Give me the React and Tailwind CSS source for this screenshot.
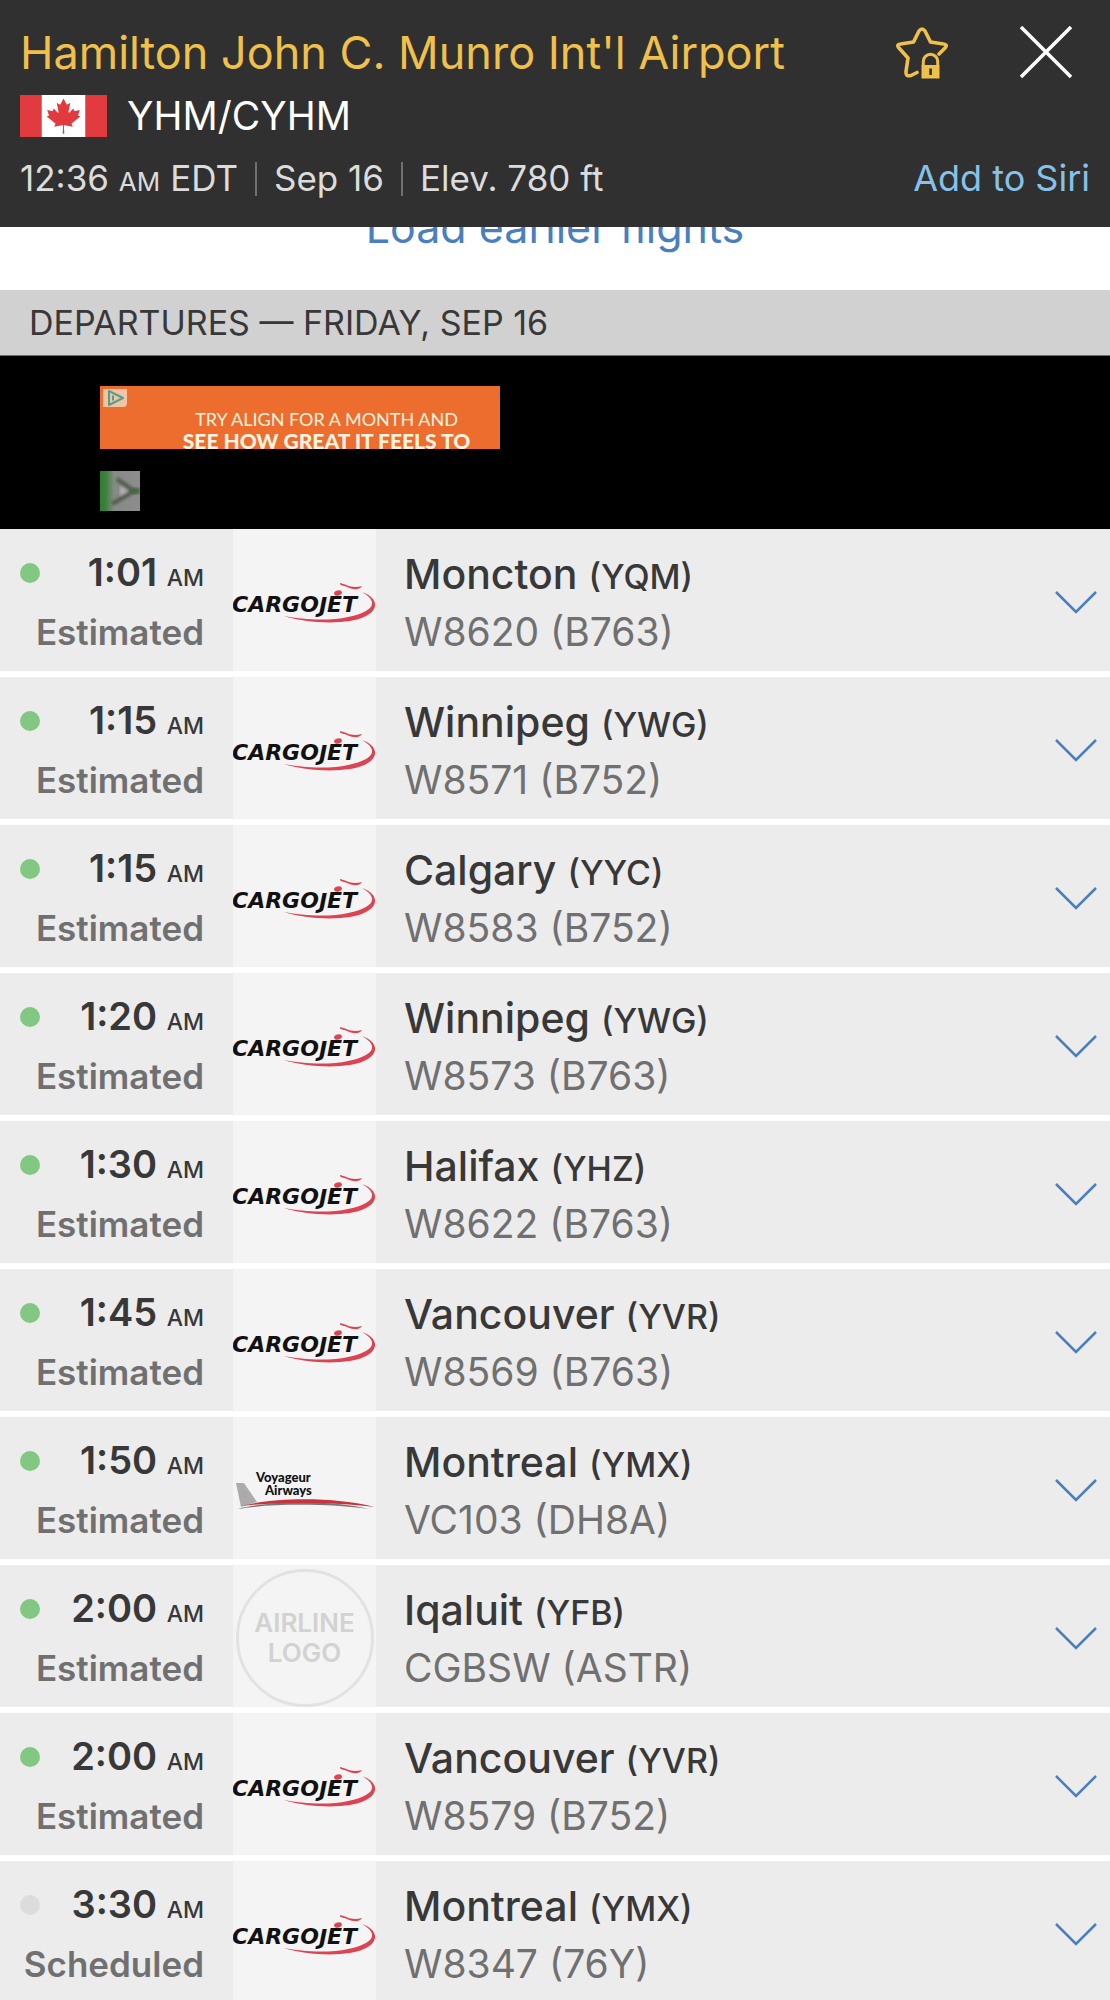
// src/App.jsx

import React, { useState } from 'react';

const flights = [
  { time: '1:01', status: 'Estimated', airline: 'cargojet', city: 'Moncton', code: 'YQM', flight: 'W8620', aircraft: 'B763' },
  { time: '1:15', status: 'Estimated', airline: 'cargojet', city: 'Winnipeg', code: 'YWG', flight: 'W8571', aircraft: 'B752' },
  { time: '1:15', status: 'Estimated', airline: 'cargojet', city: 'Calgary', code: 'YYC', flight: 'W8583', aircraft: 'B752' },
  { time: '1:20', status: 'Estimated', airline: 'cargojet', city: 'Winnipeg', code: 'YWG', flight: 'W8573', aircraft: 'B763' },
  { time: '1:30', status: 'Estimated', airline: 'cargojet', city: 'Halifax', code: 'YHZ', flight: 'W8622', aircraft: 'B763' },
  { time: '1:45', status: 'Estimated', airline: 'cargojet', city: 'Vancouver', code: 'YVR', flight: 'W8569', aircraft: 'B763' },
  { time: '1:50', status: 'Estimated', airline: 'voyageur', city: 'Montreal', code: 'YMX', flight: 'VC103', aircraft: 'DH8A' },
  { time: '2:00', status: 'Estimated', airline: '', city: 'Iqaluit', code: 'YFB', flight: 'CGBSW', aircraft: 'ASTR' },
  { time: '2:00', status: 'Estimated', airline: 'cargojet', city: 'Vancouver', code: 'YVR', flight: 'W8579', aircraft: 'B752' },
  { time: '3:30', status: 'Scheduled', airline: 'cargojet', city: 'Montreal', code: 'YMX', flight: 'W8347', aircraft: '76Y' },
];

const CanadaFlag = () => (
  <svg viewBox="0 0 9600 4800" className="h-[42px] w-[87px] shrink-0" preserveAspectRatio="none" aria-hidden="true">
    <path fill="#e23b3f" d="M0 0h9600v4800H0z" />
    <path
      fill="#fff"
      d="m2400 0h4800v4800h-4800zm2490 4430-45-863a95 95 0 0 1 111-98l859 151-116-320a65 65 0 0 1 20-73l941-762-212-99a65 65 0 0 1-34-79l186-572-542 115a65 65 0 0 1-73-38l-105-247-423 454a65 65 0 0 1-111-57l204-1052-327 189a65 65 0 0 1-91-27l-332-652-332 652a65 65 0 0 1-91 27l-327-189 204 1052a65 65 0 0 1-111 57l-423-454-105 247a65 65 0 0 1-73 38l-542-115 186 572a65 65 0 0 1-34 79l-212 99 941 762a65 65 0 0 1 20 73l-116 320 859-151a95 95 0 0 1 111 98l-45 863z"
    />
  </svg>
);

const StarLockIcon = () => (
  <svg viewBox="0 0 52 52" className="size-[52px]" fill="none" aria-hidden="true">
    <path
      d="M43 27L49 21Q52 17.500 47.500 17L34.500 15L29 4Q26 0 23 4L17.500 15L4.500 17Q0 17.500 3 21L12 31L10 44.500Q9.500 50 15 48.500L21 45.500"
      stroke="#efc04a"
      strokeWidth="3.600"
      strokeLinecap="round"
      strokeLinejoin="round"
    />
    <path d="M27.300 39v-4.500a7.200 7.200 0 0 1 14.400 0V39" stroke="#efc04a" strokeWidth="3" />
    <path d="M25.500 38h18v13.500h-18z" fill="#efc04a" />
    <path d="M33.300 41.500h2.600v6.500h-2.600z" fill="#303030" />
  </svg>
);

const CargojetLogo = () => (
  <svg viewBox="0 0 143 142" className="size-full" role="img" aria-label="Cargojet">
    <path d="M129 63C149 70 147 87 117 92C97 95 69 93 51 87C70 91 98 92 115 88C143 82 145 72 129 63z" fill="#dc4453" />
    <path d="M107 54C113 55 118 60 129 57C126 62 118 60 114 58C111 56 106 57 107 54z" fill="#dc4453" />
    <ellipse cx="105" cy="64" rx="4" ry="2.500" transform="rotate(-15 105 64)" fill="#dc4453" />
    <text x="-1" y="83" className="font-['DejaVu_Sans'] text-[22px] font-bold italic" fill="#111">
      CARGO<tspan dy="1">J</tspan><tspan dy="-1">ET</tspan>
    </text>
  </svg>
);

const VoyageurLogo = () => (
  <svg viewBox="0 0 143 142" className="size-full" role="img" aria-label="Voyageur Airways">
    <path d="M3 66h7q2 0 3 3l11 16-16 5z" fill="#ababab" />
    <path d="M5 92C38 83 100 83 136 92C100 87 40 86 5 92z" fill="#777" />
    <path d="M8 89C42 80 104 80 141 90C102 85 42 85 8 89z" fill="#c9343c" />
    <text x="23" y="65" className="font-['Lato'] text-[13px] leading-none font-black" fill="#111">Voyageur</text>
    <text x="32" y="78" className="font-['Lato'] text-[13px] leading-none font-black" fill="#111">Airways</text>
  </svg>
);

const PlaceholderLogo = () => (
  <div className="mt-1 flex size-[138px] flex-col items-center justify-center rounded-full border-3 border-[#e2e2e2] text-[26px] leading-[30px] font-semibold text-[#d2d2d2]">
    <span>AIRLINE</span>
    <span>LOGO</span>
  </div>
);

const AirlineLogo = ({ airline }) => {
  if (airline === 'cargojet') return <CargojetLogo />;
  if (airline === 'voyageur') return <VoyageurLogo />;
  return <PlaceholderLogo />;
};

const Header = () => (
  <header className="relative z-10 shrink-0 bg-[#303030] px-5 pt-[25px] pb-4">
    <div className="flex items-center justify-between">
      <h1 className="text-[45px] leading-[56px] text-[#efc04a]">Hamilton John C. Munro Int'l Airport</h1>
      <div className="flex items-center gap-[72px] pr-[18px]">
        <button type="button" aria-label="Add to favorites">
          <StarLockIcon />
        </button>
        <button type="button" aria-label="Close">
          <svg viewBox="0 0 52 54" className="h-[54px] w-[52px]" stroke="#fff" strokeWidth="3.500" aria-hidden="true">
            <path d="M1 1l50 50M51 1L1 51" />
          </svg>
        </button>
      </div>
    </div>
    <div className="mt-[5px] flex items-center gap-5">
      <CanadaFlag />
      <p className="text-[39px] leading-[60px] text-white">YHM/CYHM</p>
    </div>
    <div className="flex items-center justify-between leading-[65px]">
      <div className="flex items-center gap-[17px] text-[35px] text-[#dcdcdc]">
        <span>
          12:36 <span className="text-[26px] leading-none">AM</span> EDT
        </span>
        <span className="h-[34px] w-0.5 bg-[#707070]" />
        <span>Sep 16</span>
        <span className="h-[34px] w-0.5 bg-[#707070]" />
        <span>Elev. 780 ft</span>
      </div>
      <button type="button" className="text-[36px] text-[#86c1ea]">
        Add to Siri
      </button>
    </div>
  </header>
);

const AdBanner = () => (
  <div className="flex flex-col items-start gap-[22px] border-t border-[#707070] bg-black px-[100px] pt-[30px] pb-[18px]">
    <a href="#ad" className="flex h-[63px] w-[400px] items-start overflow-hidden bg-[#ec6d2d] font-['Lato'] text-[#fff3e0]">
      <svg viewBox="0 0 24 18" className="mt-[3px] ml-[3px] h-[18px] w-6" fill="none" aria-hidden="true">
        <path d="M0 0h24v14q0 4-4 4H0z" fill="#f4c4a0" />
        <path d="M6 2l14 7-14 7z" stroke="#4f9f98" strokeWidth="2" strokeLinejoin="round" />
        <path d="M10 6.500v5" stroke="#4f9f98" strokeWidth="2" />
      </svg>
      <span className="flex flex-1 flex-col items-center pt-[23px] pr-1 pl-[30px] leading-[21px] whitespace-nowrap">
        <span className="text-[18px]">TRY ALIGN FOR A MONTH AND</span>
        <span className="text-[21px] font-black">SEE HOW GREAT IT FEELS TO</span>
      </span>
    </a>
    <svg viewBox="0 0 40 40" className="size-10" aria-hidden="true">
      <defs>
        <linearGradient id="tile" x1="0" x2="1" y1="0" y2="0">
          <stop offset="0" stopColor="#2f7d30" />
          <stop offset="0.150" stopColor="#3f8040" />
          <stop offset="0.350" stopColor="#858b84" />
          <stop offset="1" stopColor="#8f8b90" />
        </linearGradient>
        <filter id="soft">
          <feGaussianBlur stdDeviation="1.500" />
        </filter>
      </defs>
      <path d="M0 0h40v40H0z" fill="url(#tile)" />
      <path d="M17 8l17 12-22 13" fill="none" stroke="#4f5a48" strokeWidth="4" filter="url(#soft)" />
      <path d="M32 17h8v6h-8z" fill="#3c6a38" filter="url(#soft)" />
      <path d="M20 15l8 5-8 5z" fill="#b5aeb8" filter="url(#soft)" />
    </svg>
  </div>
);

const FlightRow = ({ flight, open, onToggle }) => (
  <li className="flex h-[142px] shrink-0 bg-[#ececec]">
    <div className="w-[233px] shrink-0 pt-[13px] pr-[29px] pl-5 text-right leading-[60px] font-semibold">
      <div className="flex items-center justify-between">
        <span
          className={
            flight.status === 'Scheduled'
              ? 'mt-0.5 size-5 rounded-full bg-[#dcdcdc]'
              : 'mt-0.5 size-5 rounded-full bg-[#82c882]'
          }
        />
        <p className="text-[38px] text-[#383838]">
          {flight.time} <span className="text-[23px] leading-none font-medium">AM</span>
        </p>
      </div>
      <p className="text-[35px] text-[#707070]">{flight.status}</p>
    </div>
    <div className="flex w-[143px] shrink-0 items-center justify-center bg-[#f4f4f4]">
      <AirlineLogo airline={flight.airline} />
    </div>
    <div className="min-w-0 flex-1 pt-4 pl-7 leading-[58px] text-[#383838]">
      <p className="text-[41px] font-medium">
        {flight.city} <span className="text-[34px] leading-none">({flight.code})</span>
      </p>
      <p className="text-[39px] text-[#707070]">
        {flight.flight} ({flight.aircraft})
      </p>
    </div>
    <button
      type="button"
      className="flex w-[68px] items-center justify-center pt-1.5"
      aria-label={`Details for ${flight.flight}`}
      aria-expanded={open}
      onClick={onToggle}
    >
      <svg viewBox="0 0 42 24" className="h-6 w-[42px]" fill="none" stroke="#4a7fbd" strokeWidth="2.500" aria-hidden="true">
        <path d="M1 1l20 20L41 1" />
      </svg>
    </button>
  </li>
);

const App = () => {
  const [openFlight, setOpenFlight] = useState(null);

  return (
    <div className="flex h-screen flex-col overflow-hidden bg-white font-['Inter',sans-serif]">
      <Header />
      <main className="flex flex-col">
        {/* scrolled part way under the header */}
        <button type="button" className="-mt-[30px] h-[93px] pb-[33px] text-[43px] leading-[60px] text-[#4a7fbd]">
          Load earlier flights
        </button>
        <h2 className="bg-[#d1d1d1] px-[29px] text-[34px] leading-[65px] text-[#383838]">
          DEPARTURES — FRIDAY, SEP 16
        </h2>
        <AdBanner />
        <ul className="flex flex-col gap-1.5">
          {flights.map((flight) => (
            <FlightRow
              key={flight.flight}
              flight={flight}
              open={openFlight === flight.flight}
              onToggle={() => setOpenFlight(openFlight === flight.flight ? null : flight.flight)}
            />
          ))}
        </ul>
      </main>
    </div>
  );
};

export default App;
